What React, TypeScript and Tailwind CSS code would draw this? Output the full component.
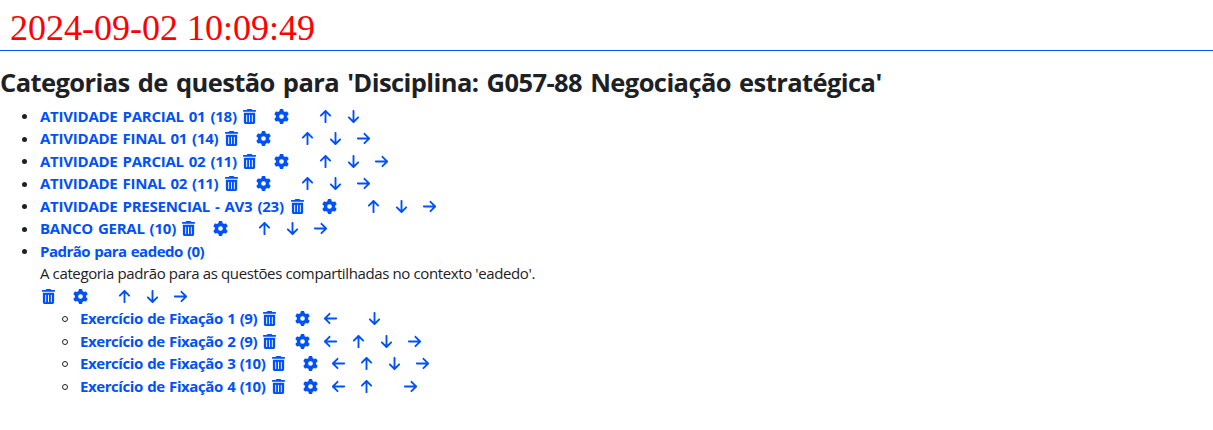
import { FaTrashCan, FaGear, FaArrowLeft, FaArrowUp, FaArrowDown, FaArrowRight } from "react-icons/fa6";

type Action = "left" | "up" | "down" | "right" | "none";
type Category = { name: string; width: string; actions: Action[] };

const categories: Category[] = [
  { name: "ATIVIDADE PARCIAL 01 (18)", width: "w-[197px]", actions: ["none", "up", "down"] },
  { name: "ATIVIDADE FINAL 01 (14)", width: "w-[179px]", actions: ["none", "up", "down", "right"] },
  { name: "ATIVIDADE PARCIAL 02 (11)", width: "w-[197px]", actions: ["none", "up", "down", "right"] },
  { name: "ATIVIDADE FINAL 02 (11)", width: "w-[179px]", actions: ["none", "up", "down", "right"] },
  { name: "ATIVIDADE PRESENCIAL - AV3 (23)", width: "w-[245px]", actions: ["none", "up", "down", "right"] },
  { name: "BANCO GERAL (10)", width: "w-[136px]", actions: ["none", "up", "down", "right"] },
];

const exercises: Category[] = [
  { name: "Exercício de Fixação 1 (9)", width: "w-[177.5px]", actions: ["left", "none", "down"] },
  { name: "Exercício de Fixação 2 (9)", width: "w-[177.5px]", actions: ["left", "up", "down", "right"] },
  { name: "Exercício de Fixação 3 (10)", width: "w-[186px]", actions: ["left", "up", "down", "right"] },
  { name: "Exercício de Fixação 4 (10)", width: "w-[186px]", actions: ["left", "up", "none", "right"] },
];

const arrows = { left: FaArrowLeft, up: FaArrowUp, down: FaArrowDown, right: FaArrowRight };

function Actions({ actions }: { actions: Action[] }) {
  return (
    <span className="flex h-[22.5px] items-center pb-px text-[15px] text-[#0051f9]">
      <a className="mr-[16.5px] flex w-4 justify-center"><FaTrashCan /></a>
      <a className="mr-3 flex w-4 justify-center"><FaGear /></a>
      {actions.map((action, i) => {
        if (action === "none") return <span key={i} className="w-4" />;
        const Arrow = arrows[action];
        return (
          <a key={i} className="mr-3 flex w-4 justify-center"><Arrow /></a>
        );
      })}
    </span>
  );
}

function Row({ item, nested = false }: { item: Category; nested?: boolean }) {
  return (
    <li className="flex h-[22.5px] items-center">
      <Bullet hollow={nested} />
      <a className={`${item.width} ${nested ? "tracking-[-0.42px] [word-spacing:0.9px]" : "tracking-[-0.24px] [word-spacing:1.3px]"} mr-1 shrink-0 pb-0.5 whitespace-nowrap font-bold text-[#0051f9]`}>{item.name}</a>
      <Actions actions={item.actions} />
    </li>
  );
}

function Bullet({ hollow = false }: { hollow?: boolean }) {
  return (
    <span className="flex w-10 shrink-0 justify-end pr-3">
      <span className={hollow ? "size-1.5 rounded-full border border-[#1d2125]" : "mr-px size-[5px] rounded-full bg-[#1d2125]"} />
    </span>
  );
}

export default function App() {
  return (
    <main className="h-[430px] overflow-hidden bg-white font-['Open_Sans',sans-serif] text-[15px] leading-[22.5px] text-[#1d2125]">
      <header className="h-[51px] border-b border-[#0051f9] pt-2 pl-2.5 font-['Liberation_Serif',serif] text-[36px] leading-[41px] text-[red]">
        2024-09-02 10:09:49
      </header>
      <h2 className="mt-[15px] h-[39.5px] whitespace-nowrap text-[25.5px] leading-[32px] font-bold tracking-[-0.57px] [word-spacing:2px]">
        Categorias de questão para 'Disciplina: G057-88 Negociação estratégica'
      </h2>
      <ul>
        {categories.map((item) => <Row key={item.name} item={item} />)}
        <li>
          <div className="flex h-[22.5px] items-center">
            <Bullet />
            <a className="pb-0.5 font-bold tracking-[-0.5px] [word-spacing:0.7px] text-[#0051f9]">Padrão para eadedo (0)</a>
          </div>
          <div>
            <p className="-mt-px mb-px pl-10 whitespace-nowrap tracking-[-0.38px]">A categoria padrão para as questões compartilhadas no contexto 'eadedo'.</p>
            <div className="pl-10">
              <Actions actions={["none", "up", "down", "right"]} />
              <ul>
                {exercises.map((item) => <Row key={item.name} item={item} nested />)}
              </ul>
            </div>
          </div>
        </li>
      </ul>
    </main>
  );
}
